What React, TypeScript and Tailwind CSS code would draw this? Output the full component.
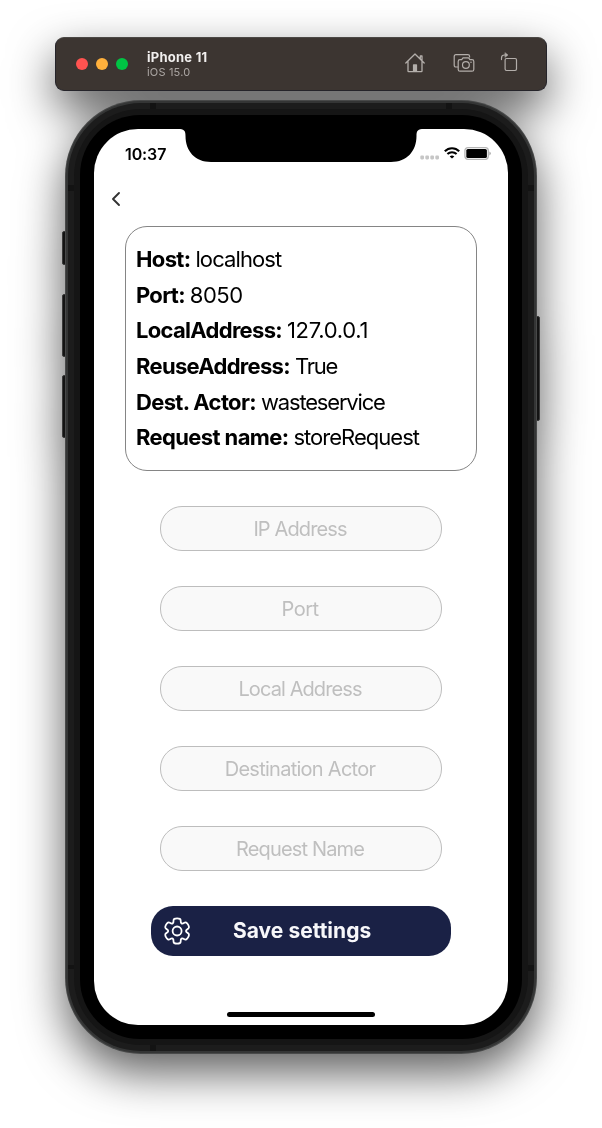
const rows = [
  { label: 'Host:', value: 'localhost', ls: 'tracking-[-0.65px]', vs: 'tracking-[-0.9px]' },
  { label: 'Port:', value: '8050', ls: 'tracking-[-0.7px]', vs: 'tracking-[-0.5px]' },
  { label: 'LocalAddress:', value: '127.0.0.1', ls: 'tracking-[-0.7px]', vs: 'tracking-[-0.27px]' },
  { label: 'ReuseAddress:', value: 'True', ls: 'tracking-[-0.69px]', vs: 'tracking-[-1.2px]' },
  { label: 'Dest. Actor:', value: 'wasteservice', ls: 'tracking-[-0.65px]', vs: 'tracking-[-1.18px]' },
  { label: 'Request name:', value: 'storeRequest', ls: 'tracking-[-0.62px]', vs: 'tracking-[-0.98px]' },
];

const fields = [
  { name: 'IP Address', ls: 'tracking-[-0.88px]' },
  { name: 'Port', ls: 'tracking-[-0.55px]' },
  { name: 'Local Address', ls: 'tracking-[-0.9px]' },
  { name: 'Destination Actor', ls: 'tracking-[-0.73px]' },
  { name: 'Request Name', ls: 'tracking-[-0.83px]' },
];

function HomeIcon() {
  return (
    <svg width="22" height="22" viewBox="0 0 22 22" fill="none" stroke="#b3aeaa" strokeWidth="1.3" strokeLinejoin="round" strokeLinecap="round">
      <path d="M1.8 11 L11 2 L20.2 11 M4 9.5 V19 Q4 19.6 4.6 19.6 H17.4 Q18 19.6 18 19 V9.5 M16.3 6.8 V4 H18 V8.6" />
      <path d="M8.9 19.6 V13 Q8.9 12.3 9.6 12.3 H12.4 Q13.1 12.3 13.1 13 V19.6 Z" fill="#b3aeaa" stroke="none" />
    </svg>
  );
}

function CameraIcon() {
  return (
    <svg width="22" height="20" viewBox="0 0 22 20" fill="none" stroke="#b3aeaa" strokeWidth="1.2" strokeLinejoin="round">
      <path d="M5.2 14 H3 Q1.2 14 1.2 12.2 V3.5 Q1.2 1.7 3 1.7 H14.8 Q16.6 1.7 16.6 3.5 V4.6" />
      <path d="M7 6.6 H8.7 L10 4.9 H15.6 L16.9 6.6 H19 Q20.8 6.6 20.8 8.4 V16.4 Q20.8 18.2 19 18.2 H7 Q5.2 18.2 5.2 16.4 V8.4 Q5.2 6.6 7 6.6 Z" />
      <circle cx="12.9" cy="12" r="3.4" />
      <circle cx="18" cy="9.2" r="0.8" fill="#b3aeaa" stroke="none" />
    </svg>
  );
}

function RotateIcon() {
  return (
    <svg width="18" height="20" viewBox="0 0 18 20" fill="none" stroke="#b3aeaa" strokeWidth="1.2" strokeLinejoin="round" strokeLinecap="round">
      <rect x="5.1" y="6.500" width="11.4" height="12" rx="1.4" />
      <path d="M1.5 7.6 V6 Q1.5 3 4.5 3 H6.5" />
      <path d="M5.2 0.8 L8 3 L5.2 5.2 Z" fill="#b3aeaa" strokeWidth="0.5" />
    </svg>
  );
}

function Toolbar() {
  return (
    <header className="flex h-[54px] w-[492px] shrink-0 items-center rounded-[9px] border border-[#25242a] border-t-[#4b4845] bg-[#3c3531] pl-[20px] pr-[28px]">
      <div className="flex gap-2">
        <span className="size-3 rounded-full bg-[#ff5350]" />
        <span className="size-3 rounded-full bg-[#ffb03c]" />
        <span className="size-3 rounded-full bg-[#00c444]" />
      </div>
      <div className="ml-[19px] flex flex-1 flex-col">
        <span className="text-[13px] leading-[15px] font-bold tracking-[0.25px] text-[#f1efee]">iPhone 11</span>
        <span className="text-[11px] leading-[14px] tracking-[0.18px] text-[#aca7a4]">iOS 15.0</span>
      </div>
      <div className="flex items-center pb-[2px]">
        <HomeIcon />
        <div className="ml-[27px]"><CameraIcon /></div>
        <div className="ml-[25px] -mt-0.5"><RotateIcon /></div>
      </div>
    </header>
  );
}

function StatusBar() {
  return (
    <div className="flex h-[50px] items-center justify-between pl-[31px] pr-[17px]">
      <span className="text-[16px] font-semibold tracking-[-0.1px] text-black">10:37</span>
      <div className="flex items-center pb-[1px]">
        <svg width="19" height="5" viewBox="0 0 19 5" fill="#c6c6c6" className="mt-[8px]">
          <rect x="0.3" y="0.6" width="3.7" height="3.8" rx="1.1" />
          <rect x="5.3" y="0.6" width="3.7" height="3.8" rx="1.1" />
          <rect x="10.3" y="0.6" width="3.7" height="3.8" rx="1.1" />
          <rect x="15.3" y="0.6" width="3.7" height="3.8" rx="1.1" />
        </svg>
        <svg width="16" height="12" viewBox="0 0 16 12" fill="none" stroke="#000" strokeWidth="2.1" className="mb-[1px] ml-[5px]">
          <path d="M0.8 4.3 C4.8 0.2 11.2 0.2 15.2 4.3" />
          <path d="M3.4 7.1 C6 4.6 10 4.6 12.6 7.1" />
          <path d="M8 11.6 L5.7 9.4 Q8 7.5 10.3 9.4 Z" fill="#000" stroke="none" />
        </svg>
        <svg width="27" height="13" viewBox="0 0 27 13" className="ml-1">
          <rect x="0.9" y="0.7" width="23.4" height="11.6" rx="3" fill="#fff" stroke="#b5b5b5" strokeWidth="1.3" />
          <rect x="2.3" y="2" width="20.6" height="9" rx="1.6" fill="#000" />
          <path d="M25.4 4.6 Q26.8 5.2 26.8 6.5 Q26.8 7.8 25.4 8.4 Z" fill="#a5a5a5" />
        </svg>
      </div>
    </div>
  );
}

// Six-lobed gear outline: control points per tooth, smoothed through their midpoints.
function gearPath(cx: number, cy: number) {
  const tooth: [number, number][] = [[8.9, -23], [13.2, -16], [13.2, 16], [8.9, 23]];
  const pts: [number, number][] = [];
  for (let k = 0; k < 6; k++) {
    for (const [r, a] of tooth) {
      const t = ((k * 60 + a - 90) * Math.PI) / 180;
      pts.push([cx + r * Math.cos(t), cy + r * Math.sin(t)]);
    }
  }
  const mid = (a: [number, number], b: [number, number]) =>
    `${((a[0] + b[0]) / 2).toFixed(2)} ${((a[1] + b[1]) / 2).toFixed(2)}`;
  let d = `M${mid(pts[pts.length - 1], pts[0])}`;
  pts.forEach((p, i) => {
    d += ` Q${p[0].toFixed(2)} ${p[1].toFixed(2)} ${mid(p, pts[(i + 1) % pts.length])}`;
  });
  return d + ' Z';
}

function GearIcon() {
  return (
    <svg width="27" height="28" viewBox="0 0 27 28" fill="none" stroke="#fff" strokeWidth="1.8">
      <path d={gearPath(13.1, 14)} />
      <circle cx="13.1" cy="14" r="4.5" />
    </svg>
  );
}

function Screen() {
  return (
    <div className="relative flex h-[896px] w-[414px] flex-col overflow-hidden rounded-[44px] bg-white">
      <svg width="246" height="34" viewBox="0 0 246 34" className="absolute top-0 left-[84px]">
        <path d="M0 0 C6 0 7.500 1.500 7.500 7 C7.500 22 17 33 33 33 H213 C229 33 238.500 22 238.500 7 C238.500 1.500 240 0 246 0 Z" fill="#000" />
      </svg>
      <StatusBar />
      <div className="flex h-[40px] items-center pl-[17px]">
        <svg width="10" height="16" viewBox="0 0 10 16" fill="none" stroke="#333" strokeWidth="1.9" strokeLinecap="round" strokeLinejoin="round">
          <path d="M8 2 L2 8 L8 14" />
        </svg>
      </div>
      <div className="mx-[31px] mt-[7px] flex h-[245px] shrink-0 flex-col rounded-[22px] border border-[#858585] pt-[14.6px] pl-[10px]">
        {rows.map((r) => (
          <div key={r.label} className="flex h-[35.7px] shrink-0 items-center gap-[5px] text-[22px] whitespace-nowrap text-black">
            <b className={'font-bold ' + r.ls}>{r.label}</b>
            <span className={r.vs}>{r.value}</span>
          </div>
        ))}
      </div>
      <div className="mt-[35px] flex flex-col items-center gap-[35px]">
        {fields.map((f) => (
          <input
            key={f.name}
            placeholder={f.name}
            className={'h-[45px] w-[282px] rounded-[22px] border border-[#bdbdbd] bg-[#f9f9f9] pr-[2px] text-center text-[20px] outline-none placeholder:text-[#bfbfbf] ' + f.ls}
          />
        ))}
      </div>
      <button className="mt-[35px] ml-[57px] flex h-[50px] w-[300px] shrink-0 items-center rounded-[22px] bg-[#1a2145] pl-[13px] text-[21px] font-bold text-[#f7f7fa]">
        <GearIcon />
        <span className="ml-[42px] tracking-[0.02px] whitespace-nowrap">Save settings</span>
      </button>
      <div className="mt-[56px] ml-[133px] h-[5px] w-[148px] rounded-full bg-black" />
    </div>
  );
}

function Phone() {
  return (
    <div className="relative mt-[9px]">
      <span className="absolute top-[131px] -left-[3px] h-[34px] w-[6px] rounded-[2px] border border-[#3a3a3a] bg-[#141414]" />
      <span className="absolute top-[194px] -left-[3px] h-[63px] w-[6px] rounded-[2px] border border-[#3a3a3a] bg-[#141414]" />
      <span className="absolute top-[275px] -left-[3px] h-[63px] w-[6px] rounded-[2px] border border-[#3a3a3a] bg-[#141414]" />
      <span className="absolute top-[216px] -right-[3px] h-[105px] w-[6px] rounded-[2px] border border-[#3a3a3a] bg-[#141414]" />
      <div className="relative flex h-[954px] w-[472px] rounded-[76px] bg-[#484949] p-[1px]">
        <div className="flex flex-1 rounded-[75px] bg-[#343535] p-[2px]">
          <div className="flex flex-1 rounded-[73px] bg-[#1c1c1c] p-[6px]">
            <div className="flex flex-1 rounded-[67px] bg-[#151515] p-[6px]">
              <div className="flex flex-1 items-center justify-center rounded-[60px] bg-black">
                <Screen />
              </div>
            </div>
          </div>
        </div>
        <i className="absolute top-[3px] left-[85px] h-[6px] w-[6px] bg-[#131313]" />
        <i className="absolute top-[3px] right-[85px] h-[6px] w-[6px] bg-[#131313]" />
        <i className="absolute bottom-[3px] left-[85px] h-[6px] w-[6px] bg-[#131313]" />
        <i className="absolute top-[85px] left-[3px] h-[6px] w-[6px] bg-[#131313]" />
        <i className="absolute top-[85px] right-[3px] h-[6px] w-[6px] bg-[#131313]" />
        <i className="absolute bottom-[85px] left-[3px] h-[4px] w-[6px] bg-[#131313]" />
        <i className="absolute right-[3px] bottom-[83px] h-[6px] w-[6px] bg-[#131313]" />
      </div>
    </div>
  );
}

export default function App() {
  return (
    <main className="h-[1128px] w-[602px] overflow-hidden bg-white font-['Inter',sans-serif]">
      <div className="flex h-full flex-col items-center pt-[37px] [filter:drop-shadow(0_19px_23px_rgba(0,0,0,0.63))]">
        <Toolbar />
        <Phone />
      </div>
    </main>
  );
}
